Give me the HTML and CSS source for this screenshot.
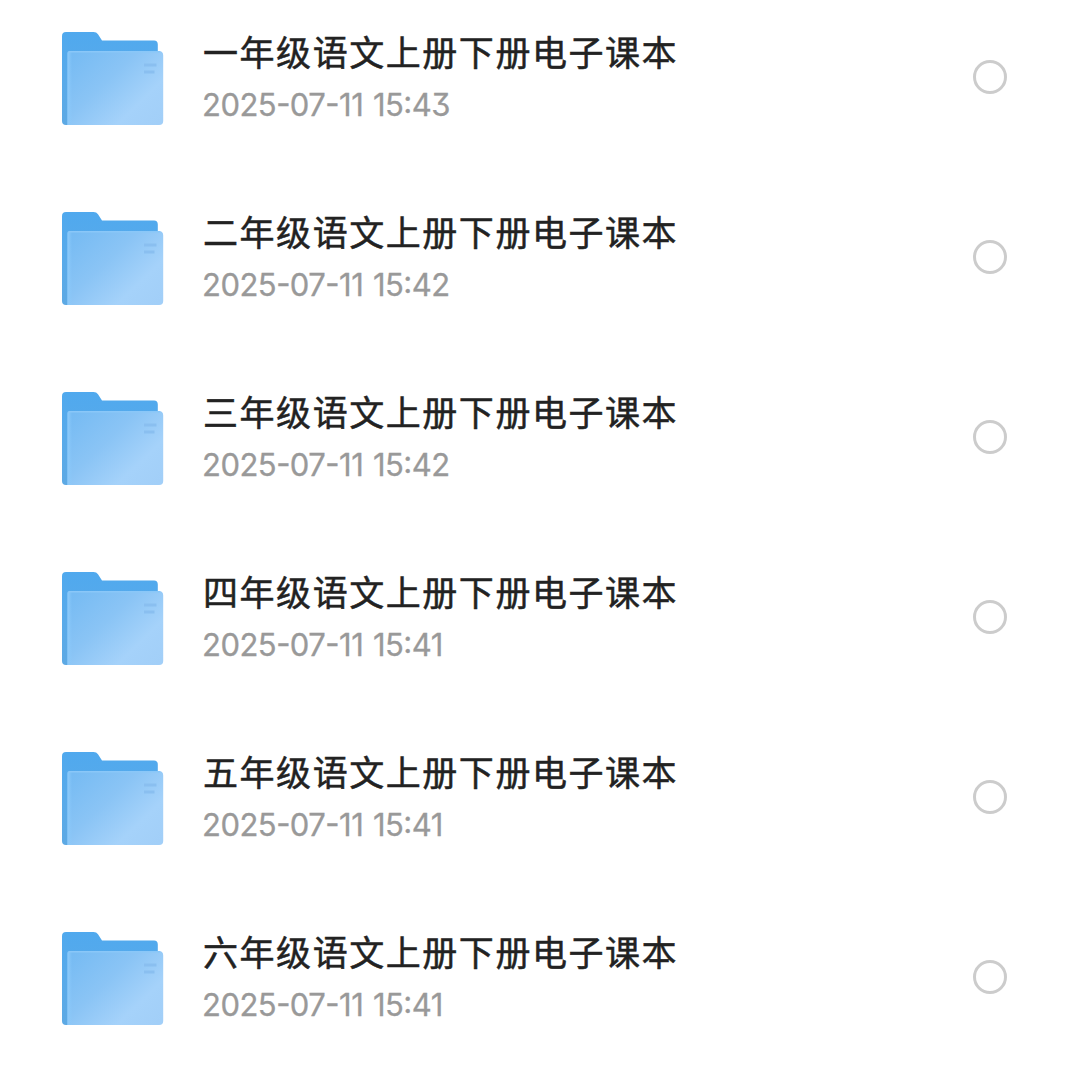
FILE: index.html
```html
<!DOCTYPE html>
<html lang="zh-CN">
<head>
    <meta charset="UTF-8">
    <meta name="viewport" content="width=device-width, initial-scale=1.0">
    <title>电子课本</title>
    <link rel="stylesheet" href="styles.css">
</head>
<body>
    <svg class="defs" width="0" height="0">
        <defs>
            <linearGradient id="back" x1="0" y1="0" x2="0" y2="1">
                <stop offset="0" stop-color="#50a9ee"/>
                <stop offset="0.5" stop-color="#58aaea"/>
                <stop offset="1" stop-color="#5da9e4"/>
            </linearGradient>
            <linearGradient id="front" x1="0" y1="0.1" x2="1" y2="0.9">
                <stop offset="0" stop-color="#76bbf3"/>
                <stop offset="0.4" stop-color="#8ac4f5"/>
                <stop offset="0.75" stop-color="#a5d2fa"/>
                <stop offset="1" stop-color="#a2cff8"/>
            </linearGradient>
            <linearGradient id="edge" x1="0" y1="0" x2="1" y2="0">
                <stop offset="0" stop-color="#8ccafa"/>
                <stop offset="1" stop-color="#8ccafa" stop-opacity="0"/>
            </linearGradient>
            <symbol id="folder" viewBox="0 0 102 94">
                <path d="M4 0H31.500Q34.500 0 36 2.300L40 8.500H92Q95.800 8.500 95.800 12.500V60L90 93H4Q0 93 0 89V4Q0 0 4 0Z" fill="url(#back)"/>
                <path d="M5.500 21Q5.500 19 7.500 19H97Q101.200 19 101.200 23.500V89Q101.200 93 97.200 93H5.500Z" fill="url(#front)"/>
                <path d="M5.500 21Q5.500 19 7.500 19H10V93H5.500Z" fill="url(#edge)"/>
                <path d="M7 19.700H98" stroke="#8ac7f8" stroke-width="1.400"/>
                <path d="M82 33H94.500M82 40H92.500" stroke="#8abff0" stroke-width="2.800"/>
            </symbol>
        </defs>
    </svg>
    <ul class="file-list">
        <li class="file-item">
            <svg class="folder"><use href="#folder"/></svg>
            <div class="info">
                <div class="name">一年级语文上册下册电子课本</div>
                <div class="date">2025-07-11 15:43</div>
            </div>
            <span class="check"></span>
        </li>
        <li class="file-item">
            <svg class="folder"><use href="#folder"/></svg>
            <div class="info">
                <div class="name">二年级语文上册下册电子课本</div>
                <div class="date">2025-07-11 15:42</div>
            </div>
            <span class="check"></span>
        </li>
        <li class="file-item">
            <svg class="folder"><use href="#folder"/></svg>
            <div class="info">
                <div class="name">三年级语文上册下册电子课本</div>
                <div class="date">2025-07-11 15:42</div>
            </div>
            <span class="check"></span>
        </li>
        <li class="file-item">
            <svg class="folder"><use href="#folder"/></svg>
            <div class="info">
                <div class="name">四年级语文上册下册电子课本</div>
                <div class="date">2025-07-11 15:41</div>
            </div>
            <span class="check"></span>
        </li>
        <li class="file-item">
            <svg class="folder"><use href="#folder"/></svg>
            <div class="info">
                <div class="name">五年级语文上册下册电子课本</div>
                <div class="date">2025-07-11 15:41</div>
            </div>
            <span class="check"></span>
        </li>
        <li class="file-item">
            <svg class="folder"><use href="#folder"/></svg>
            <div class="info">
                <div class="name">六年级语文上册下册电子课本</div>
                <div class="date">2025-07-11 15:41</div>
            </div>
            <span class="check"></span>
        </li>
    </ul>
</body>
</html>
```
FILE: styles.css
```css
body {
    font-family: Inter, "Noto Sans CJK SC", sans-serif;
    margin: 0;
    background-color: #fff;
}
.defs {
    display: block;
}
.file-list {
    list-style: none;
    margin: 0;
    padding: 0;
    height: 1080px;
    overflow: hidden;
}
.file-item {
    display: flex;
    align-items: center;
    height: 180px;
    box-sizing: border-box;
    padding: 0 73px 26px 62px;
}
.folder {
    display: block;
    flex: none;
    width: 102px;
    height: 94px;
    margin-top: 4px;
}
.info {
    flex: 1;
    margin-left: 39px;
}
.name {
    font-family: "Noto Sans CJK SC", sans-serif;
    font-size: 35px;
    font-weight: 400;
    line-height: 52px;
    letter-spacing: 1.550px;
    color: #222;
    -webkit-text-stroke: 0.500px #222;
    white-space: nowrap;
}
.date {
    font-size: 31px;
    line-height: 52px;
    margin-top: 2px;
    margin-bottom: -2px;
    margin-left: -1px;
    letter-spacing: -0.520px;
    word-spacing: 1.500px;
    color: #999;
    -webkit-text-stroke: 0.300px #999;
    font-feature-settings: "case", "cv09";
    white-space: nowrap;
}
.check {
    flex: none;
    width: 34px;
    height: 34px;
    box-sizing: border-box;
    border: 3px solid #ccc;
    border-radius: 50%;
}
```
